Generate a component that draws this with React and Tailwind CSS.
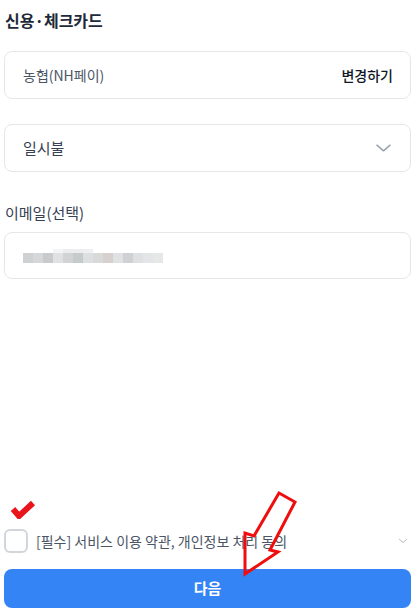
import React from "react";

const font = { fontFamily: '"Noto Sans CJK KR", "Noto Sans", sans-serif' };

const Chevron = ({ className }) => (
  <svg viewBox="0 0 16 8" className={className} fill="none" stroke="currentColor" strokeWidth="1.6" strokeLinecap="round" strokeLinejoin="round">
    <path d="M1 1l7 6 7-6" />
  </svg>
);

export default function App() {
  return (
    <div className="relative w-full h-[614px] bg-white flex flex-col pl-1 pr-[8px] pb-[6px]" style={font}>
      <h2 className="mt-[8px] h-6 leading-6 text-[16px] font-semibold text-gray-800 pl-[1px]">신용·체크카드</h2>

      {/* card */}
      <div className="mt-[19px] h-[48px] rounded-lg border border-gray-200 flex items-center justify-between pl-[18px] pr-[17px]">
        <span className="text-[14px] text-gray-600">농협(NH페이)</span>
        <span className="text-[14px] font-medium text-gray-900">변경하기</span>
      </div>

      {/* installment */}
      <div className="mt-[25px] h-[48px] rounded-lg border border-gray-200 flex items-center justify-between pl-[18px] pr-[19px]">
        <span className="text-[15px] text-gray-700">일시불</span>
        <Chevron className="w-[15px] h-[8px] text-gray-400" />
      </div>

      <label className="mt-[30px] h-[22px] leading-[22px] text-[15px] text-gray-700 pl-[1px]">이메일(선택)</label>

      <div className="mt-[8px] h-[47px] rounded-lg border border-gray-200 flex items-center pl-[18px]">
        <div className="flex flex-col">
          <div className="flex ml-[30px] h-[4px]">
            <span className="w-[10px] bg-[#f3f4f5]" />
            <span className="w-[20px] bg-[#ecedee]" />
            <span className="w-[10px] bg-[#eeefef]" />
          </div>
          <div className="flex h-[10px]">
            <span className="w-[10px] bg-[#cfd0d1]" />
            <span className="w-[10px] bg-[#d6d7d8]" />
            <span className="w-[10px] bg-[#c8cacb]" />
            <span className="w-[10px] bg-[#e0e1e2]" />
            <span className="w-[10px] bg-[#d1d3d4]" />
            <span className="w-[10px] bg-[#c6cacb]" />
            <span className="w-[10px] bg-[#dde0e0]" />
            <span className="w-[10px] bg-[#d9d9da]" />
            <span className="w-[10px] bg-[#d6d0ce]" />
            <span className="w-[10px] bg-[#dfe1e2]" />
            <span className="w-[10px] bg-[#cfd1d5]" />
            <span className="w-[10px] bg-[#dfe0e1]" />
            <span className="w-[10px] bg-[#e3e6e6]" />
            <span className="w-[10px] bg-[#e6e8e8]" />
          </div>
        </div>
      </div>

      <div className="flex-1" />

      {/* agreement */}
      <div className="relative h-[24px] flex items-center">
        <svg viewBox="0 0 26 20" className="absolute left-[6px] -top-[30px] w-[26px] h-[20px]">
          <path d="M3 10l6 7 14-13" fill="none" stroke="#e8161c" strokeWidth="6" strokeLinejoin="miter" />
        </svg>
        <span className="w-[24px] h-[24px] rounded-md border-2 border-gray-300 shrink-0" />
        <span className="ml-[8px] text-[14px] text-gray-600 flex-1">[필수] 서비스 이용 약관, 개인정보 처리 동의</span>
        <Chevron className="w-[8px] h-[4px] text-gray-400 mr-[4px]" />
      </div>

      <button className="mt-[16px] h-[39px] rounded-lg bg-[#3584f6] text-white text-[15px] font-bold">다음</button>

      {/* annotation arrow */}
      <svg className="absolute inset-0 w-full h-full pointer-events-none" viewBox="0 0 419 614">
        <polygon
          points="279,493 295,502 270,550 278,552 245,574 245,533 254,536"
          fill="none"
          stroke="#f00d0d"
          strokeWidth="3"
          strokeLinejoin="miter"
        />
      </svg>
    </div>
  );
}
